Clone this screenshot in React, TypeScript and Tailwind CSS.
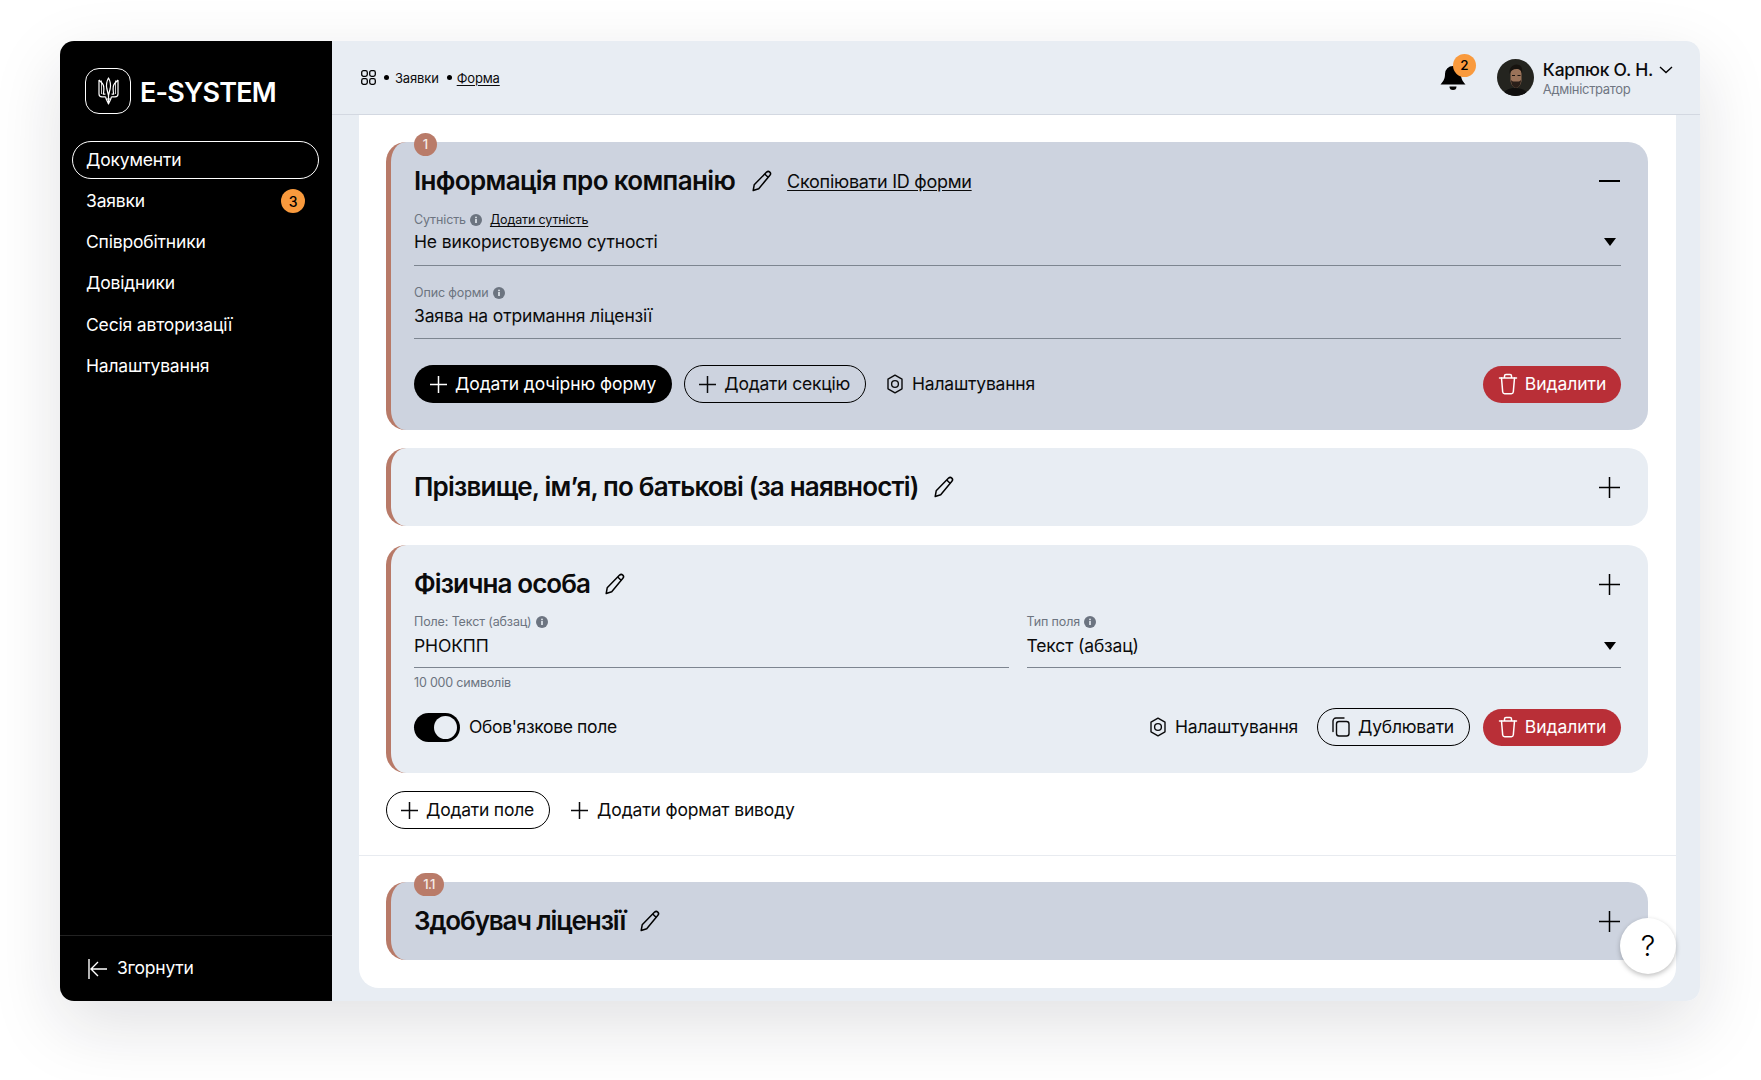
import type { ReactNode } from 'react';

const navItems = ['Документи', 'Заявки', 'Співробітники', 'Довідники', 'Сесія авторизації', 'Налаштування'];

function PlusIcon({ size = 17, width = 1.5 }: { size?: number; width?: number }) {
  return (
    <svg width={size} height={size} viewBox="0 0 22 22" fill="none" stroke="currentColor" strokeWidth={width * (22 / size)} className="shrink-0">
      <path d="M11 0v22M0 11h22" />
    </svg>
  );
}

function PencilIcon() {
  return (
    <svg width="24" height="24" viewBox="0 0 24 24" fill="none" stroke="currentColor" strokeWidth="1.5" strokeLinejoin="round" className="shrink-0">
      <path d="M3.200 21.500l1-5.700L16.600 3.100a2.300 2.300 0 0 1 3.300 3.200L8.700 19.700z" />
      <path d="M14.700 5l3.400 3.200" />
    </svg>
  );
}

function HexIcon() {
  return (
    <svg width="18" height="20" viewBox="0 0 18 20" fill="none" stroke="currentColor" strokeWidth="1.4" className="shrink-0">
      <path d="M9 1.200l7 4v9.600l-7 4-7-4V5.200z" strokeLinejoin="round" />
      <circle cx="9" cy="10" r="3.400" />
    </svg>
  );
}

function TrashIcon() {
  return (
    <svg width="20" height="22" viewBox="0 0 20 22" fill="none" stroke="currentColor" strokeWidth="1.5" strokeLinecap="round" strokeLinejoin="round" className="shrink-0">
      <path d="M1.500 5h17M6.500 5V3a1.500 1.500 0 0 1 1.500-1.500h4A1.500 1.500 0 0 1 13.500 3v2" />
      <path d="M3.500 5l1.200 14a2 2 0 0 0 2 1.700h6.600a2 2 0 0 0 2-1.700L16.500 5" />
    </svg>
  );
}

function CopyIcon() {
  return (
    <svg width="18" height="20" viewBox="0 0 18 20" fill="none" stroke="currentColor" strokeWidth="1.4" strokeLinejoin="round" className="shrink-0">
      <rect x="4.500" y="4.500" width="12.500" height="14.500" rx="2.500" />
      <path d="M1 14.500V4a3 3 0 0 1 3-3h8" strokeLinecap="round" />
    </svg>
  );
}

function InfoDot() {
  return (
    <svg width="12" height="12" viewBox="0 0 12 12" className="shrink-0">
      <circle cx="6" cy="6" r="6" fill="#6c7480" />
      <rect x="5.200" y="5" width="1.600" height="4" fill="#e8edf3" />
      <rect x="5.200" y="2.700" width="1.600" height="1.500" fill="#e8edf3" />
    </svg>
  );
}

function Caret() {
  return <div className="h-0 w-0 shrink-0 border-x-[6px] border-t-[8px] border-x-transparent border-t-black" />;
}

function Trident() {
  return (
    <svg width="21" height="28" viewBox="0 0 21 28" fill="none" stroke="white" strokeWidth="1.200" strokeLinejoin="round">
      <path d="M10.500 1C8.500 4.500 8.100 8 8.800 11.500l1.700 7 1.700-7C12.900 8 12.500 4.500 10.500 1z" />
      <path d="M1 3v14c0 1.800 1.200 2.800 3 2.800h3.600M1 3l3.400 3.500c1.400 1.500 1.700 4.500 1.300 8.300l-.4 2.300h2.100" />
      <path d="M20 3v14c0 1.800-1.200 2.800-3 2.800h-3.600M20 3l-3.400 3.500c-1.400 1.500-1.700 4.500-1.300 8.300l.4 2.300h-2.100" />
      <path d="M3.500 3.500V17M17.500 3.500V17" strokeWidth="0.800" />
      <path d="M7.600 19.800c.2 2.200 1.400 3.700 2.900 7.200 1.500-3.500 2.700-5 2.900-7.200M10.500 18.500V27M7.800 22h5.400" />
    </svg>
  );
}

function Avatar() {
  return (
    <svg width="37" height="37" viewBox="0 0 37 37" className="shrink-0 rounded-full">
      <rect width="37" height="37" fill="#24241f" />
      <path d="M6 37c1-6 6-8 12-8s12 2 14 8z" fill="#100f0e" />
      <path d="M13.500 15c0-5 2.500-7 5.500-7s5.500 2 5.500 7v6c0 4-3 8-5.500 8s-5.500-4-5.500-8z" fill="#9a7259" />
      <path d="M12.500 15c-.5-6 3-9.500 7-9.500s6.500 3 5.500 9c-1-3-2-4.500-5.500-4.500s-5.500 1.500-7 5z" fill="#17130f" />
      <path d="M14 21c1.500 2 3 1.500 5 1.500s3.500.5 5-1.500c0 5-3 8-5 8s-5-3-5-8z" fill="#2a1f19" />
      <rect x="15" y="16" width="3" height="1" fill="#1a1311" />
      <rect x="20.500" y="16" width="3" height="1" fill="#1a1311" />
    </svg>
  );
}

function Card({ active, badge, children }: { active?: boolean; badge?: string; children: ReactNode }) {
  return (
    <div className={`relative rounded-[20px] border-l-[5px] border-[#b87a68] pl-[23px] pr-[27px] ${active ? 'bg-[#cdd3df]' : 'bg-[#e8edf3]'}`}>
      {badge && (
        <div className={`absolute left-[23px] top-[-9px] flex h-[23px] items-center justify-center rounded-full bg-[#b97b69] text-[13px] font-medium text-[#f5ece8] ${badge.length > 1 ? 'w-[30px] tracking-[-0.05em]' : 'w-[23px]'}`}>
          {badge}
        </div>
      )}
      {children}
    </div>
  );
}

function Title({ tracking, children }: { tracking: string; children: ReactNode }) {
  return <h3 className={`text-[26px] leading-[28px] font-semibold text-[#0b0b0c] ${tracking}`}>{children}</h3>;
}

function Label({ children }: { children: ReactNode }) {
  return (
    <div className="flex h-4 items-center gap-[4px] text-[12.500px] tracking-[-0.01em] text-[#6c7480]">
      <span>{children}</span>
      <InfoDot />
    </div>
  );
}

function Value({ children, select }: { children: ReactNode; select?: boolean }) {
  return (
    <div className="flex h-[26px] items-center justify-between pr-[5px] text-[17.500px] tracking-[-0.008em] text-[#0b0b0c]">
      <span>{children}</span>
      {select && <Caret />}
    </div>
  );
}

function OutlineButton({ icon, children }: { icon: ReactNode; children: ReactNode }) {
  return (
    <button className="flex h-[38px] items-center gap-[8px] rounded-full border-[1.500px] border-black pl-[14px] pr-[15px] text-[17.500px] tracking-[-0.012em] text-[#0b0b0c]">
      {icon}
      {children}
    </button>
  );
}

function SettingsLink() {
  return (
    <div className="flex items-center gap-[8px] text-[17.500px] tracking-[-0.012em] text-[#0b0b0c]">
      <HexIcon />
      Налаштування
    </div>
  );
}

function DeleteButton() {
  return (
    <button className="flex h-[37px] w-[138px] items-center justify-center gap-[7px] rounded-full bg-[#b92f37] text-[17.500px] tracking-[-0.003em] text-white">
      <TrashIcon />
      Видалити
    </button>
  );
}

export default function App() {
  return (
    <div className="h-[1080px] w-[1761px] overflow-hidden bg-white pl-[60px] pt-[41px] font-['Inter',sans-serif]">
      <div className="flex h-[960px] w-[1640px] overflow-hidden rounded-[14px] shadow-[0_24px_70px_rgba(20,25,35,0.13)]">
        {/* Sidebar */}
        <aside className="flex w-[272px] shrink-0 flex-col bg-black text-white">
          <div className="flex items-center gap-[9px] pl-[25px] pt-[27px]">
            <div className="flex h-[46px] w-[46px] items-center justify-center rounded-[14px] border-[1.500px] border-white">
              <Trident />
            </div>
            <span className="mt-[4px] text-[27px] font-semibold tracking-[-0.03em]">E-SYSTEM</span>
          </div>
          <nav className="mt-[27px] flex flex-col gap-[3.200px] pl-[12px] pr-[13px]">
            {navItems.map((item, index) => (
              <div key={item} className={`flex h-[38px] items-center justify-between rounded-full pr-[14px] text-[17.500px] tracking-[-0.01em] ${index === 0 ? 'border-[1.500px] border-white pl-[13px]' : 'pl-[14px]'}`}>
                {item}
                {item === 'Заявки' && (
                  <span className="flex h-[24px] w-[24px] items-center justify-center rounded-full bg-[#f99a3d] text-[14px] font-medium text-black">3</span>
                )}
              </div>
            ))}
          </nav>
          <div className="mt-auto flex h-[66px] items-center gap-[10px] border-t-[1.500px] border-[#222] pl-[28px] text-[17.500px] tracking-[-0.015em]">
            <svg width="19" height="20" viewBox="0 0 19 20" fill="none" stroke="white" strokeWidth="1.400">
              <path d="M1 0v20M19 10H3M10 3l-7 7 7 7" />
            </svg>
            Згорнути
          </div>
        </aside>

        {/* Main */}
        <main className="flex min-w-0 flex-1 flex-col bg-[#e8edf3]">
          <header className="flex h-[74px] shrink-0 items-center justify-between border-b-[1.500px] border-[#d3d8e1] pl-[29px] pr-[27px]">
            <div className="flex items-center text-[13px] tracking-[-0.012em] text-[#0b0b0c]">
              <svg width="15" height="15" viewBox="0 0 15 15" fill="none" stroke="black" strokeWidth="1.300">
                <rect x="0.700" y="0.700" width="5.600" height="5.600" rx="1.800" />
                <rect x="8.700" y="0.700" width="5.600" height="5.600" rx="1.800" />
                <rect x="0.700" y="8.700" width="5.600" height="5.600" rx="1.800" />
                <rect x="8.700" y="8.700" width="5.600" height="5.600" rx="1.800" />
              </svg>
              <span className="ml-[8px] mr-[6px] h-[5px] w-[5px] rounded-full bg-black" />
              <span className="pt-[2px]">Заявки</span>
              <span className="ml-[8px] mr-[5px] h-[5px] w-[5px] rounded-full bg-black" />
              <span className="pt-[2px] underline underline-offset-2">Форма</span>
            </div>
            <div className="flex items-center">
              <div className="relative mr-[31px] h-[28px] w-[26px]">
                <svg width="26" height="28" viewBox="0 0 26 28" fill="black">
                  <path d="M13 2a8 8 0 0 0-8 8c0 5-1.500 7-4.500 10.500h25C22.500 17 21 15 21 10a8 8 0 0 0-8-8z" />
                  <path d="M9.500 22.500h7a3.500 3.500 0 0 1-7 0z" />
                </svg>
                <span className="absolute right-[-10px] top-[-10px] flex h-[23px] w-[23px] items-center justify-center rounded-full bg-[#f99a3d] text-[13.500px] font-medium text-black">2</span>
              </div>
              <Avatar />
              <div className="ml-[9px] flex flex-col">
                <div className="flex items-center gap-[6px]">
                  <span className="text-[17.500px] leading-[22px] font-medium tracking-[-0.015em] text-[#0b0b0c]">Карпюк О. Н.</span>
                  <svg width="14" height="8" viewBox="0 0 14 8" fill="none" stroke="black" strokeWidth="1.400">
                    <path d="M1 1l6 5.500L13 1" />
                  </svg>
                </div>
                <span className="text-[13px] leading-[16px] tracking-[-0.025em] text-[#6f7682]">Адміністратор</span>
              </div>
            </div>
          </header>

          <div className="relative mb-[13px] ml-[27px] mr-[24px] flex min-h-0 flex-1 flex-col rounded-b-[20px] bg-white">
            <div className="flex flex-col gap-[19px] pl-[27px] pr-[28px] pt-[27px]">
              <Card active badge="1">
                <div className="pt-[25px]">
                  <div className="flex h-[28px] items-center">
                    <Title tracking="tracking-[-0.025em]">Інформація про компанію</Title>
                    <span className="ml-[15px]"><PencilIcon /></span>
                    <span className="ml-[13px] pt-[1px] text-[18px] tracking-[-0.015em] text-[#0b0b0c] underline underline-offset-2">Скопіювати ID форми</span>
                    <span className="ml-auto mr-[1px] h-[1.500px] w-[21px] bg-black" />
                  </div>
                  <div className="mt-[17px] flex h-4 items-center gap-[8px] text-[12.500px] tracking-[-0.01em]">
                    <Label>Сутність</Label>
                    <span className="text-[#0b0b0c] underline underline-offset-2">Додати сутність</span>
                  </div>
                  <div className="mt-[1px] border-b-[1.500px] border-[#7d8590] pb-[10px]">
                    <Value select>Не використовуємо сутності</Value>
                  </div>
                  <div className="mt-[19px]">
                    <Label>Опис форми</Label>
                  </div>
                  <div className="mt-[2px] border-b-[1.500px] border-[#7d8590] pb-[9px]">
                    <Value>Заява на отримання ліцензії</Value>
                  </div>
                  <div className="mt-[26px] flex items-center pb-[27px]">
                    <button className="flex h-[38px] items-center gap-[8px] rounded-full bg-black pl-[16px] pr-[16px] text-[17.500px] tracking-[-0.004em] text-white">
                      <PlusIcon />
                      Додати дочірню форму
                    </button>
                    <div className="ml-[12px] mr-[20px]">
                      <OutlineButton icon={<PlusIcon />}>Додати секцію</OutlineButton>
                    </div>
                    <SettingsLink />
                    <div className="ml-auto"><DeleteButton /></div>
                  </div>
                </div>
              </Card>

              <div className="-mt-px">
                <Card>
                  <div className="flex h-[78px] items-center">
                    <Title tracking="tracking-[-0.031em]">Прізвище, імʼя, по батькові (за наявності)</Title>
                    <span className="ml-[13px]"><PencilIcon /></span>
                    <span className="ml-auto mr-[1px]"><PlusIcon size={21} /></span>
                  </div>
                </Card>
              </div>

              <Card>
                <div className="pt-[25px]">
                  <div className="flex h-[28px] items-center">
                    <Title tracking="tracking-[-0.035em]">Фізична особа</Title>
                    <span className="ml-[13px]"><PencilIcon /></span>
                    <span className="ml-auto mr-[1px]"><PlusIcon size={21} /></span>
                  </div>
                  <div className="mt-[16px] grid grid-cols-2 gap-x-[18px]">
                    <div>
                      <Label>Поле: Текст (абзац)</Label>
                      <div className="mt-[3px] border-b-[1.500px] border-[#7d8590] pb-[8px]">
                        <Value>РНОКПП</Value>
                      </div>
                    </div>
                    <div>
                      <Label>Тип поля</Label>
                      <div className="mt-[3px] border-b-[1.500px] border-[#7d8590] pb-[8px]">
                        <Value select>Текст (абзац)</Value>
                      </div>
                    </div>
                  </div>
                  <div className="mt-[7px] h-4 text-[12.500px] leading-4 tracking-[-0.015em] text-[#6c7480]">10 000 символів</div>
                  <div className="mt-[17px] flex items-center pb-[27px]">
                    <div className="flex h-[29px] w-[46px] items-center justify-end rounded-full bg-black pr-[3px]">
                      <span className="h-[23px] w-[23px] rounded-full bg-[#e8edf3]" />
                    </div>
                    <span className="ml-[9px] text-[17.500px] tracking-[-0.02em] text-[#0b0b0c]">Обов'язкове поле</span>
                    <div className="ml-auto flex items-center">
                      <SettingsLink />
                      <div className="ml-[19px] mr-[13px]">
                        <OutlineButton icon={<CopyIcon />}>Дублювати</OutlineButton>
                      </div>
                      <DeleteButton />
                    </div>
                  </div>
                </div>
              </Card>

              <div className="-mt-px flex items-center gap-[21px]">
                <OutlineButton icon={<PlusIcon />}>Додати поле</OutlineButton>
                <div className="flex items-center gap-[9px] text-[17.500px] tracking-[-0.008em] text-[#0b0b0c]">
                  <PlusIcon />
                  Додати формат виводу
                </div>
              </div>
            </div>

            <div className="mt-[26px] border-t border-[#e8ebf0] pl-[27px] pr-[28px] pt-[26px]">
              <Card active badge="1.1">
                <div className="flex h-[78px] items-center">
                  <Title tracking="tracking-[-0.043em]">Здобувач ліцензії</Title>
                  <span className="ml-[13px]"><PencilIcon /></span>
                  <span className="ml-auto mr-[1px]"><PlusIcon size={21} /></span>
                </div>
              </Card>
            </div>

            {/* Help */}
            <div className="absolute bottom-[14px] right-0 flex h-[56px] w-[56px] items-center justify-center rounded-full bg-white text-[29px] font-light text-black shadow-[0_2px_5px_rgba(0,0,0,0.25)]">?</div>
          </div>
        </main>
      </div>
    </div>
  );
}
